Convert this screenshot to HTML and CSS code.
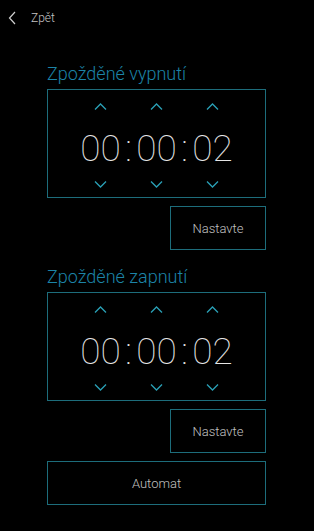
FILE: index.html
```html
<!DOCTYPE html>
<html lang="cs">
<head>
<meta charset="utf-8">
<link rel="stylesheet" href="styles.css">
</head>
<body>
<header class="topbar">
  <svg class="back-icon" width="8" height="14" viewBox="0 0 8 14"><path d="M7 1 L1.5 7 L7 13" fill="none" stroke="#cfcfcf" stroke-width="1.2"/></svg>
  <span class="back-text">Zpět</span>
</header>
<main class="content">
  <section class="timer-section">
    <h2 class="title">Zpožděné vypnutí</h2>
    <div class="timer-box">
      <div class="unit">
        <svg class="chev" width="13" height="7" viewBox="0 0 13 7"><path d="M1 6.5 L6.5 1 L12 6.5" fill="none" stroke="#2aa0b6" stroke-width="1.3"/></svg>
        <div class="digits">00</div>
        <svg class="chev chev-down" width="13" height="7" viewBox="0 0 13 7"><path d="M1 0.5 L6.5 6 L12 0.5" fill="none" stroke="#2aa0b6" stroke-width="1.3"/></svg>
      </div>
      <div class="colon">:</div>
      <div class="unit">
        <svg class="chev" width="13" height="7" viewBox="0 0 13 7"><path d="M1 6.5 L6.5 1 L12 6.5" fill="none" stroke="#2aa0b6" stroke-width="1.3"/></svg>
        <div class="digits">00</div>
        <svg class="chev chev-down" width="13" height="7" viewBox="0 0 13 7"><path d="M1 0.5 L6.5 6 L12 0.5" fill="none" stroke="#2aa0b6" stroke-width="1.3"/></svg>
      </div>
      <div class="colon">:</div>
      <div class="unit">
        <svg class="chev" width="13" height="7" viewBox="0 0 13 7"><path d="M1 6.5 L6.5 1 L12 6.5" fill="none" stroke="#2aa0b6" stroke-width="1.3"/></svg>
        <div class="digits">02</div>
        <svg class="chev chev-down" width="13" height="7" viewBox="0 0 13 7"><path d="M1 0.5 L6.5 6 L12 0.5" fill="none" stroke="#2aa0b6" stroke-width="1.3"/></svg>
      </div>
    </div>
    <div class="btn-row"><button class="btn btn-small">Nastavte</button></div>
  </section>
  <section class="timer-section second">
    <h2 class="title">Zpožděné zapnutí</h2>
    <div class="timer-box">
      <div class="unit">
        <svg class="chev" width="13" height="7" viewBox="0 0 13 7"><path d="M1 6.5 L6.5 1 L12 6.5" fill="none" stroke="#2aa0b6" stroke-width="1.3"/></svg>
        <div class="digits">00</div>
        <svg class="chev chev-down" width="13" height="7" viewBox="0 0 13 7"><path d="M1 0.5 L6.5 6 L12 0.5" fill="none" stroke="#2aa0b6" stroke-width="1.3"/></svg>
      </div>
      <div class="colon">:</div>
      <div class="unit">
        <svg class="chev" width="13" height="7" viewBox="0 0 13 7"><path d="M1 6.5 L6.5 1 L12 6.5" fill="none" stroke="#2aa0b6" stroke-width="1.3"/></svg>
        <div class="digits">00</div>
        <svg class="chev chev-down" width="13" height="7" viewBox="0 0 13 7"><path d="M1 0.5 L6.5 6 L12 0.5" fill="none" stroke="#2aa0b6" stroke-width="1.3"/></svg>
      </div>
      <div class="colon">:</div>
      <div class="unit">
        <svg class="chev" width="13" height="7" viewBox="0 0 13 7"><path d="M1 6.5 L6.5 1 L12 6.5" fill="none" stroke="#2aa0b6" stroke-width="1.3"/></svg>
        <div class="digits">02</div>
        <svg class="chev chev-down" width="13" height="7" viewBox="0 0 13 7"><path d="M1 0.5 L6.5 6 L12 0.5" fill="none" stroke="#2aa0b6" stroke-width="1.3"/></svg>
      </div>
    </div>
    <div class="btn-row"><button class="btn btn-small">Nastavte</button></div>
  </section>
  <button class="btn btn-wide">Automat</button>
</main>
</body>
</html>
```
FILE: styles.css
```css
* { box-sizing: border-box; }
html, body { margin: 0; padding: 0; background: #000; }
body {
  width: 314px;
  height: 531px;
  font-family: Roboto, "Noto Sans", sans-serif;
  color: #d8d8d8;
  overflow: hidden;
}
.topbar {
  height: 36px;
  display: flex;
  align-items: center;
  padding: 0 0 0 8px;
  gap: 15px;
}
.back-icon { display: block; margin-top: -1px; }
.back-text {
  font-size: 12px;
  font-weight: 300;
  color: #c4c4c4;
  margin-top: -1px;
}
.content {
  padding: 0 48px 0 47px;
  display: flex;
  flex-direction: column;
}
.timer-section { display: flex; flex-direction: column; }
.timer-section:first-child { margin-top: 27px; }
.timer-section.second { margin-top: 16px; }
.title {
  margin: 0 0 4px 0;
  font-size: 18px;
  line-height: 22px;
  font-weight: 300;
  color: #1c84a8;
}
.timer-box {
  height: 109px;
  border: 1px solid #1d6d7b;
  display: flex;
  justify-content: center;
  padding-top: 13px;
}
.unit {
  width: 42px;
  display: flex;
  flex-direction: column;
  align-items: center;
}
.chev { display: block; }
.digits {
  margin-top: 17px;
  height: 44px;
  font-size: 37px;
  line-height: 44px;
  font-weight: 100;
  color: #e6e6e6;
}
.chev-down { margin-top: 10px; }
.colon {
  width: 14px;
  text-align: center;
  margin-top: 24px;
  font-size: 37px;
  line-height: 44px;
  font-weight: 100;
  color: #e6e6e6;
}
.btn-row {
  display: flex;
  justify-content: flex-end;
  margin-top: 8px;
}
.btn {
  background: transparent;
  border: 1px solid #1d6d7b;
  color: #c0c0c0;
  font-family: Roboto, "Noto Sans", sans-serif;
  font-size: 13px;
  font-weight: 300;
  height: 44px;
  padding: 0;
}
.btn-small { width: 96px; }
.btn-wide { width: 219px; margin-top: 8px; }
```
